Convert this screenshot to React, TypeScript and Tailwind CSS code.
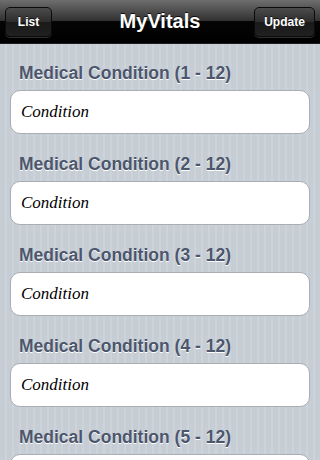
import React from 'react';

const sections = [1, 2, 3, 4, 5];

const NavButton: React.FC<{ label: string; width: string }> = ({ label, width }) => (
  <button className={`${width} h-[30px] rounded-[5px] border border-[#0b0b0b] bg-[linear-gradient(#4c4c4c,#2c2c2c_50%,#1a1a1a_50%,#202020)] shadow-[0_1px_0_rgba(255,255,255,0.18)] text-white text-[12px] font-bold [font-family:'Liberation_Sans',Arial,sans-serif] [text-shadow:0_-1px_0_rgba(0,0,0,0.7)]`}>
    {label}
  </button>
);

export default function App() {
  return (
    <div className="w-[320px] h-[460px] overflow-hidden flex flex-col bg-[repeating-linear-gradient(90deg,#c6cdd5_0px,#c6cdd5_5px,#ccd3d9_5px,#ccd3d9_7px)]">
      <header className="h-[44px] shrink-0 grid grid-cols-[1fr_auto_1fr] items-center px-[5px] border-b border-[#1e1e1e] bg-[linear-gradient(#6e6e6e,#2f2f2f_50%,#050505_50%,#000)]">
        <div className="flex justify-start">
          <NavButton label="List" width="w-[47px]" />
        </div>
        <h1 className="text-white text-[20px] font-bold [font-family:'Liberation_Sans',Arial,sans-serif] [text-shadow:0_-1px_0_rgba(0,0,0,0.8)] -mt-[2px]">
          MyVitals
        </h1>
        <div className="flex justify-end">
          <NavButton label="Update" width="w-[61px]" />
        </div>
      </header>
      <main className="flex flex-col">
        {sections.map((n, i) => (
          <section key={n} className="flex flex-col">
            <div className={`${i === 0 ? 'pt-[19px]' : 'pt-[20px]'} pb-[7px] pl-[19px]`}>
              <h2 className="text-[17.5px] leading-[20px] font-bold text-[#4c566c] [font-family:'Liberation_Sans',Arial,sans-serif] [text-shadow:0_1px_0_#fff]">
                Medical Condition ({n} - 12)
              </h2>
            </div>
            <div className="mx-[10px] h-[44px] shrink-0 rounded-[10px] border border-[#aaadb1] bg-white flex items-center pl-[10px]">
              <span className="text-[17px] italic text-black [font-family:'Liberation_Serif','Times_New_Roman',serif]">
                Condition
              </span>
            </div>
          </section>
        ))}
      </main>
    </div>
  );
}
